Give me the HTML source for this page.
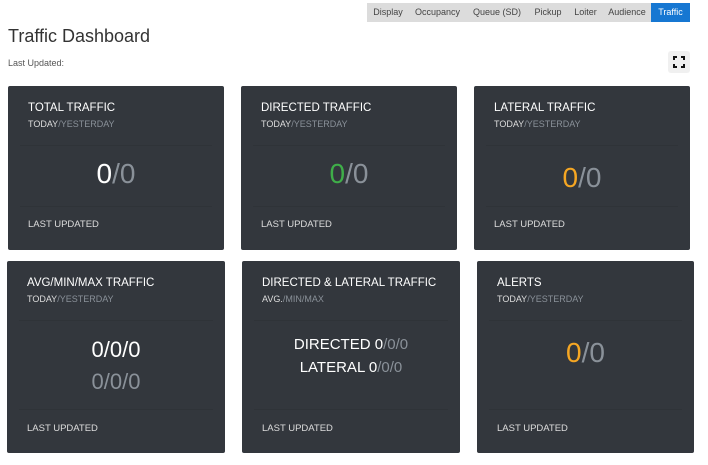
<!DOCTYPE html>
<html><head><style>
*{margin:0;padding:0;box-sizing:border-box}
body{width:708px;height:465px;background:#fff;font-family:"Liberation Sans",sans-serif;position:relative;overflow:hidden}
.tabs{position:absolute;top:3px;left:367px;height:19px;width:323px;background:#dcdcdc;display:flex;font-size:9px;color:#444}
.tabs div{line-height:19px;text-align:center}
.tabs .on{background:#1677d2;color:#fff}
h1{position:absolute;left:8px;top:26px;font-size:18px;font-weight:normal;color:#333}
.lu{position:absolute;left:8px;top:58px;font-size:9px;color:#555}
.fs{position:absolute;left:668px;top:51px;width:22px;height:22px;background:#f0f0f0;border-radius:3px}
.card{position:absolute;background:#33373d;border-radius:2px;color:#fff}
.hd{position:absolute;left:12px;right:12px;top:8px;height:52px;border-bottom:1px solid #2f3338}
.ft{position:absolute;left:12px;right:12px;bottom:8px;height:36px;border-top:1px solid #2f3338}
.t{position:absolute;left:20px;top:16px;font-size:11.5px}
.s{position:absolute;left:20px;top:33px;font-size:9px;color:#ddd}
.s span,.g{color:#8a9199}
.n{position:absolute;left:0;right:0;text-align:center;font-size:28px}
.f{position:absolute;left:20px;font-size:9.5px;color:#ddd}
.gr{color:#3fae49}.or{color:#f5a623}
</style></head><body>
<div class="tabs"><div style="width:42px">Display</div><div style="width:57px">Occupancy</div><div style="width:62px">Queue (SD)</div><div style="width:40px">Pickup</div><div style="width:35px">Loiter</div><div style="width:48px">Audience</div><div class="on" style="width:39px">Traffic</div></div>
<h1>Traffic Dashboard</h1>
<div class="lu">Last Updated:</div>
<div class="fs"><svg width="22" height="22" viewBox="0 0 22 22" fill="none" stroke="#111" stroke-width="2"><path d="M6 9V6h3M13 6h3v3M16 13v3h-3M9 16H6v-3"/></svg></div>

<div class="card" style="left:8px;top:86px;width:216px;height:164px"><div class="hd"></div><div class="ft"></div><div class="t">TOTAL TRAFFIC</div><div class="s">TODAY<span>/YESTERDAY</span></div><div class="n" style="top:72px">0<span class="g">/0</span></div><div class="f" style="top:133px">LAST UPDATED</div></div>
<div class="card" style="left:241px;top:86px;width:216px;height:164px"><div class="hd"></div><div class="ft"></div><div class="t">DIRECTED TRAFFIC</div><div class="s">TODAY<span>/YESTERDAY</span></div><div class="n" style="top:72px"><span class="gr">0</span><span class="g">/0</span></div><div class="f" style="top:133px">LAST UPDATED</div></div>
<div class="card" style="left:474px;top:86px;width:216px;height:164px"><div class="hd"></div><div class="ft"></div><div class="t">LATERAL TRAFFIC</div><div class="s">TODAY<span>/YESTERDAY</span></div><div class="n" style="top:76px"><span class="or">0</span><span class="g">/0</span></div><div class="f" style="top:133px">LAST UPDATED</div></div>

<div class="card" style="left:7px;top:261px;width:218px;height:192px"><div class="hd"></div><div class="ft"></div><div class="t">AVG/MIN/MAX TRAFFIC</div><div class="s">TODAY<span>/YESTERDAY</span></div><div class="n" style="top:76px;font-size:22px">0/0/0</div><div class="n g" style="top:108px;font-size:22px">0/0/0</div><div class="f" style="top:162px">LAST UPDATED</div></div>
<div class="card" style="left:242px;top:261px;width:218px;height:192px"><div class="hd"></div><div class="ft"></div><div class="t">DIRECTED &amp; LATERAL TRAFFIC</div><div class="s">AVG.<span>/MIN/MAX</span></div><div class="n" style="top:75px;font-size:15px">DIRECTED 0<span class="g">/0/0</span></div><div class="n" style="top:98px;font-size:15px">LATERAL 0<span class="g">/0/0</span></div><div class="f" style="top:162px">LAST UPDATED</div></div>
<div class="card" style="left:477px;top:261px;width:217px;height:192px"><div class="hd"></div><div class="ft"></div><div class="t">ALERTS</div><div class="s">TODAY<span>/YESTERDAY</span></div><div class="n" style="top:76px"><span class="or">0</span><span class="g">/0</span></div><div class="f" style="top:162px">LAST UPDATED</div></div>
</body></html>
